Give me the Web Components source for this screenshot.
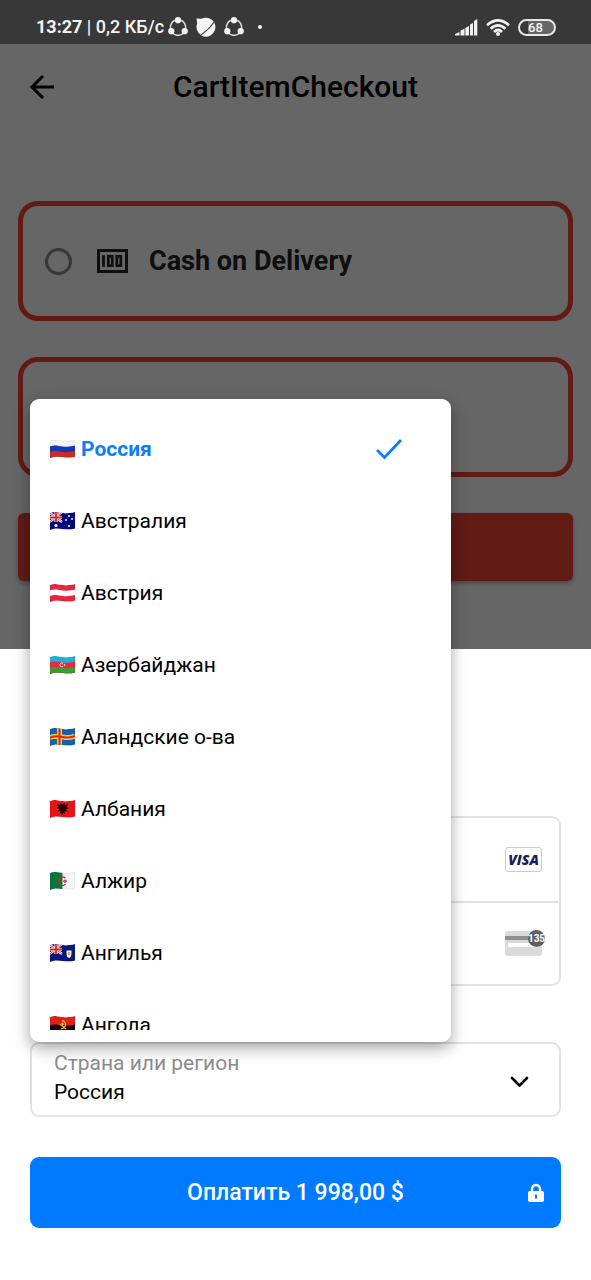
<!DOCTYPE html>
<html lang="ru">
<head>
<meta charset="utf-8">
<meta name="viewport" content="width=device-width, initial-scale=1">
<title>CartItemCheckout</title>
<style>
  html { background: #fff; }
  body { margin: 0; font-family: Roboto, "Noto Sans", sans-serif; color: #000; }
</style>
</head>
<body>
<checkout-page>
  <status-bar slot="status"></status-bar>
  <order-screen slot="order" heading="CartItemCheckout">
    <payment-option><cash-icon slot="icon"></cash-icon>Cash on Delivery</payment-option>
    <payment-option label="Card"></payment-option>
    <order-button></order-button>
  </order-screen>
  <payment-sheet slot="sheet">
    <card-fields></card-fields>
    <country-field label="Страна или регион" value="Россия">
      <country-menu>
        <country-option code="ru" selected>Россия</country-option>
        <country-option code="au">Австралия</country-option>
        <country-option code="at">Австрия</country-option>
        <country-option code="az">Азербайджан</country-option>
        <country-option code="ax">Аландские о-ва</country-option>
        <country-option code="al">Албания</country-option>
        <country-option code="dz">Алжир</country-option>
        <country-option code="ai">Ангилья</country-option>
        <country-option code="ao">Ангола</country-option>
      </country-menu>
    </country-field>
    <pay-button>Оплатить 1 998,00 $</pay-button>
  </payment-sheet>
</checkout-page>

<script>
const BASE = ':host,*,*::before,*::after{box-sizing:border-box} svg{display:block} button,input,select{font:inherit;color:inherit;margin:0}';

function define(name, render, after) {
  customElements.define(name, class extends HTMLElement {
    constructor() {
      super();
      this.attachShadow({ mode: 'open' });
    }
    connectedCallback() {
      this.shadowRoot.innerHTML = '<style>' + BASE + '</style>' + render(this);
      if (after) after(this, this.shadowRoot);
    }
  });
}

define('checkout-page', () => `
  <style>:host{display:flex;flex-direction:column;min-height:100vh}</style>
  <slot name="status"></slot><slot name="order"></slot><slot name="sheet"></slot>`);

const SHARE = `<svg width="20" height="20" viewBox="0 0 20 20" fill="none" stroke="#d8d8d8" stroke-width="1.6">
  <path d="M7 3.2A7.6 7.6 0 0 0 2.6 12M13 3.2A7.6 7.6 0 0 1 17.4 12M5 16.5a7.6 7.6 0 0 0 10 0"/>
  <g fill="#f4f4f4" stroke="none"><circle cx="10" cy="3.2" r="3.1"/><circle cx="3.3" cy="14.2" r="3.1"/><circle cx="16.7" cy="14.2" r="3.1"/></g></svg>`;

define('status-bar', () => `
  <style>
    :host{display:flex;align-items:center;justify-content:space-between;height:44px;padding:10px 35px 0 36px;background:#383838;color:#f4f4f4}
    .side{display:flex;align-items:center;gap:8px}
    .time{font-size:18px;font-weight:700;line-height:24px;white-space:nowrap;margin-right:-4px}
    .time span{font-weight:500}
    .dot{width:4px;height:4px;border-radius:50%;background:#f4f4f4;margin-left:6px}
    .battery{display:flex;align-items:center;justify-content:center;width:38px;height:17px;border:2px solid #e8e8e8;border-radius:9px;
      font-size:13px;line-height:13px;font-weight:500;padding-right:3px;background:linear-gradient(90deg,#383838 8px,#666 8px)}
  </style>
  <div class="side">
    <span class="time">13:27 <span>| 0,2 КБ/с</span></span>
    ${SHARE}
    <svg width="20" height="20" viewBox="0 0 20 20"><path d="M.5 1.500l5 .2A9.500 9.500 0 0 1 19 7.500a9.500 9.500 0 0 1-4.500 11A9.500 9.500 0 0 1 5.500 18.500 9.500 9.500 0 0 1 1.200 6.500z" fill="#f4f4f4"/><path d="M5 18Q13 12.500 18.500 4.500" fill="none" stroke="#444" stroke-width="1.100"/></svg>
    ${SHARE}
    <i class="dot"></i>
  </div>
  <div class="side">
    <svg width="23" height="17" viewBox="0 0 23 17" fill="#f0f0f0"><path d="M0 16.500v-1.500l4.500-2v3.500zM5.500 16.500v-5l4-1.800v6.800zM10.300 16.500V9L14 7v9.500zM15 16.500V5.500L18 4v12.500zM19 16.500V2L22.300 0v16.500z"/></svg>
    <svg width="24" height="17" viewBox="0 0 24 17" fill="none" stroke="#f0f0f0" stroke-width="2.600"><path d="M1 6.200Q12-3.600 23 6.200M4.600 9.700Q12 3 19.400 9.700M8 13Q12 9 16 13"/><circle cx="12" cy="15" r="2" fill="#f0f0f0" stroke="none"/></svg>
    <span class="battery">68</span>
  </div>`);

define('order-screen', host => `
  <style>
    :host{display:flex;flex-direction:column;position:relative;background:#fff}
    :host::after{content:"";position:absolute;inset:0;background:rgba(0,0,0,.6);pointer-events:none}
    header{display:grid;grid-template-columns:1fr auto 1fr;align-items:center;height:86px;padding:0 28px}
    .back{display:grid;place-items:center;width:28px;height:28px;padding:0;border:0;background:none}
    h1{margin:0;font-size:30px;line-height:36px;font-weight:500}
    main{display:flex;flex-direction:column;gap:36px;padding:71px 18px 68px}
  </style>
  <header>
    <button class="back" aria-label="Back"><svg width="28" height="28" viewBox="0 0 28 28" fill="none" stroke="#000" stroke-width="3"><path d="M26 14H4M15 3 4 14l11 11"/></svg></button>
    <h1>${host.getAttribute('heading')}</h1>
  </header>
  <main><slot></slot></main>`);

define('cash-icon', () => `
  <style>:host{display:block}</style>
  <svg width="32" height="26" viewBox="0 0 32 26" fill="none" stroke="#262626" stroke-width="3"><path d="M2.500 2.500h28v21h-28z"/><path d="M7.500 7.200v11.600" stroke-width="2.800"/><path d="M12.300 8.300h4v9.400h-4zM20.800 8.300h4v9.400h-4z" stroke-width="2.700"/></svg>`);

define('payment-option', host => `
  <style>
    :host{display:block}
    label{display:flex;align-items:center;height:120px;padding:0 22px;border:5px solid #f44336;border-radius:20px;font-size:27px;line-height:32px;font-weight:700;color:#262626}
    input{appearance:none;width:27px;height:27px;border:3px solid #8c8c8c;border-radius:50%;margin-right:24px}
    slot[name=icon]{display:block;margin-right:21px}
  </style>
  <label><input type="radio" name="method"><slot name="icon"></slot><slot></slot></label>`,
  (host, root) => { if (host.hasAttribute('label')) root.querySelector('input').setAttribute('aria-label', host.getAttribute('label')); });

define('order-button', () => `
  <style>:host{display:block} button{display:block;width:100%;height:68px;border:0;border-radius:6px;background:#f44336;box-shadow:0 2px 4px rgba(0,0,0,.35)}</style>
  <button aria-label="Checkout"></button>`);

define('payment-sheet', () => `
  <style>:host{display:flex;flex-direction:column;flex:1;position:relative;padding:167px 30px 52px;background:#fff}</style>
  <slot></slot>`);

define('card-fields', () => `
  <style>
    :host{display:flex;flex-direction:column;border:2px solid #e2e2e2;border-radius:9px;margin-bottom:56px}
    .row{display:flex;align-items:center;height:83px;padding-right:17px}
    .row + .row{border-top:2px solid #e2e2e2}
    input{flex:1;min-width:0;height:100%;border:0;padding:0 22px;background:none;font-size:21px}
    .visa{display:grid;place-items:center;width:37px;height:25px;border:1px solid #ccc;border-radius:3px;
      font:italic 800 14px/16px "Open Sans",sans-serif;color:#1a1f5c}
    .cvc{position:relative;width:37px}
    .badge{position:absolute;right:-3px;top:-1px;display:flex;justify-content:center;width:17px;height:17px;border-radius:50%;background:#606060;color:#fff;
      font-size:10px;line-height:17px;font-weight:700}
  </style>
  <div class="row"><input aria-label="Card number" inputmode="numeric"><span class="visa">VISA</span></div>
  <div class="row"><input aria-label="Expiry and CVC" inputmode="numeric"><span class="cvc">
    <svg width="37" height="25" viewBox="0 0 37 25"><rect width="37" height="25" rx="3" fill="#dadada"/><path d="M0 5h37v4H0z" fill="#8e8e8e"/><path d="M3 12h31v4H3z" fill="#fff"/></svg>
    <span class="badge">135</span></span></div>`);

define('country-field', host => `
  <style>
    :host{display:grid;position:relative;grid-template-columns:1fr auto;align-items:center;border:2px solid #e2e2e2;border-radius:9px;height:75px;margin-bottom:40px}
    label{grid-area:1/1;align-self:start;padding:7px 0 0 22px;font-size:21px;line-height:24px;color:#8c8c8c;pointer-events:none}
    select{grid-area:1/1/2/3;width:100%;height:71px;appearance:none;border:0;background:none;padding:24px 22px 0;font-size:21px;line-height:24px}
    svg{grid-area:1/2;margin-right:30px;margin-top:4px;pointer-events:none}
    .menu{position:absolute;left:-2px;bottom:73px;width:421px;max-width:100%}
  </style>
  <label for="country">${host.getAttribute('label')}</label>
  <select id="country"><option>${host.getAttribute('value')}</option></select>
  <svg width="19" height="12" viewBox="0 0 19 12" fill="none" stroke="#000" stroke-width="2.600" stroke-linecap="round" stroke-linejoin="round"><path d="M2 2l7.500 7.500L17 2"/></svg>
  <div class="menu"><slot></slot></div>`);

define('country-menu', () => `
  <style>
    :host{display:block;padding:14px 0 12px;border-radius:9px;background:#fff;box-shadow:0 6px 16px rgba(0,0,0,.36)}
    .list{display:flex;flex-direction:column;height:617px;overflow:hidden}
  </style>
  <div class="list" role="listbox" aria-label="Страна или регион"><slot></slot></div>`);

/* Flags: a waving field, with bands that follow the same curve. */
const wave = (y, color) => `<path fill="${color}" d="M0 ${y + 1}c5-2 8-.5 13 0s8 0 12-1V20H0z"/>`;
const UNION = `<path d="M0 1h12v9H0z" fill="#16166b"/><path d="M0 1l12 9M12 0 0 10" stroke="#fff" stroke-width="2.200"/><path d="M0 1l12 9M12 0 0 10" stroke="#d22" stroke-width=".8"/><path d="M6 0v10M0 5.500h12" stroke="#fff" stroke-width="3.200"/><path d="M6 0v10M0 5.500h12" stroke="#d22" stroke-width="1.800"/>`;
const STAR = (x, y, r) => `<circle cx="${x}" cy="${y}" r="${r}" fill="#fff"/>`;
const FLAGS = {
  ru: wave(0, '#f4f4f4') + wave(5.5, '#1437b8') + wave(11, '#d8271c'),
  au: wave(0, '#06067c') + UNION + STAR(6, 13.5, 1.6) + STAR(19, 4, .9) + STAR(16, 8, .9) + STAR(22, 7, .9) + STAR(19, 14, 1),
  at: wave(0, '#e5263e') + wave(5.5, '#fff') + wave(11, '#e5263e'),
  az: wave(0, '#18b3d6') + wave(5.5, '#ec2942') + wave(11, '#3f9b33') + '<path d="M13 7.400a1.900 1.900 0 1 0 0 3" fill="none" stroke="#fff" stroke-width=".9"/>' + STAR(14.5, 9, .8),
  ax: wave(0, '#1260ae') + '<path d="M9.500 0v19M0 9.500q6-2 13-.5t12-1" fill="none" stroke="#ffc81e" stroke-width="5"/><path d="M9.500 0v19M0 9.500q6-2 13-.5t12-1" fill="none" stroke="#dc2626" stroke-width="2"/>',
  al: wave(0, '#ee1217') + '<path d="M12.500 4.500 10.500 3l-.5 2-3-1.500L8 7 6.500 8.500l3 .5-2 2.500 3-.5-.5 2.500 1.500-.5 1 2 1-2 1.500.5-.5-2.500 3 .5-2-2.500 3-.5L17 7l1-3.500L15 5l-.5-2z" fill="#250507"/>',
  dz: wave(0, '#f6f6f6') + '<path d="M0 0h12.500v19H0z" fill="#087539"/><path d="M15.500 6.200a4 4 0 1 0 0 6" fill="none" stroke="#d32b35" stroke-width="1.300"/><path d="M13 9.200h4M15 7.500v3.500" stroke="#d32b35" stroke-width="1.200"/>',
  ai: wave(0, '#08197e') + UNION + '<path d="M16.500 6.500h5V10q0 3-2.500 4-2.500-1-2.500-4z" fill="#f4f0d8"/><path d="M18 8h2v3h-2z" fill="#d8a94a"/>',
  ao: wave(0, '#e0211b') + wave(8.5, '#120303') + '<path d="M12 4.500a4 4 0 1 1-1 8M10 8l6 5" fill="none" stroke="#e9b32a" stroke-width="1.300"/>' + '<circle cx="12.500" cy="8" r="1.300" fill="#e9b32a"/>'
};

define('country-flag', host => `
  <style>:host{display:block}</style>
  <svg width="25" height="18" viewBox="0 0 25 18" aria-hidden="true">
    <clipPath id="c"><path d="M0 1c5-2 8-.5 13 0s8 0 12-1v16.500c-4 1-7 1-12 .5S5 16 0 18z"/></clipPath>
    <g clip-path="url(#c)">${FLAGS[host.getAttribute('code')]}</g>
    <path d="M.25 1.250c5-2 8-.5 12.750 0s8 0 11.750-1v16c-4 1-7 1-11.750.5S5 15.750.25 17.500z" fill="none" stroke="#000" stroke-opacity=".14" stroke-width=".5"/>
  </svg>`);

define('country-option', host => `
  <style>
    :host{display:block;flex:none}
    button{display:flex;align-items:center;width:100%;height:72px;padding:0 48px 0 20px;border:0;background:none;text-align:left;font-size:21px;line-height:24px}
    country-flag{margin-right:6px}
    .name{flex:1}
    :host([selected]) button{font-weight:700;color:#0f7cf8}
  </style>
  <button role="option" aria-selected="${host.hasAttribute('selected')}">
    <country-flag code="${host.getAttribute('code')}"></country-flag>
    <span class="name"><slot></slot></span>
    ${host.hasAttribute('selected') ? '<svg width="28" height="22" viewBox="0 0 28 22" fill="none" stroke="#0f7cf8" stroke-width="2.800"><path d="M2 12l7.500 7.500L26 2"/></svg>' : ''}
  </button>`);

define('pay-button', () => `
  <style>
    :host{display:block}
    button{display:grid;grid-template-columns:1fr auto 1fr;align-items:center;width:100%;height:71px;padding:0 17px;border:0;border-radius:9px;background:#007aff;color:#fff;font-size:23px;line-height:28px;font-weight:500}
    .text{grid-column:2}
    svg{justify-self:end}
  </style>
  <button><span class="text"><slot></slot></span>
    <svg width="16" height="20" viewBox="0 0 16 20"><path d="M4 9V6a4 4 0 0 1 8 0v3" fill="none" stroke="#fff" stroke-width="2.400"/><rect y="8" width="16" height="11" rx="2" fill="#fff"/><path d="M7 11.500h2v4H7z" fill="#007aff"/></svg>
  </button>`);
</script>
</body>
</html>
